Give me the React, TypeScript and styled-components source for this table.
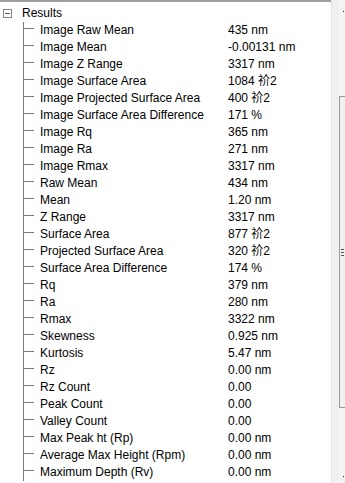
import React from "react";
import styled, { createGlobalStyle } from "styled-components";

const GlobalStyle = createGlobalStyle`
	html, body {
		margin: 0;
		padding: 0;
		background: #f0f0f0;
	}
	body {
		font-family: "Liberation Sans", Arial, "Noto Sans CJK SC", sans-serif;
		font-size: 12px;
		color: #000;
	}
`;

const results: [string, string][] = [
	["Image Raw Mean", "435 nm"],
	["Image Mean", "-0.00131 nm"],
	["Image Z Range", "3317 nm"],
	["Image Surface Area", "1084 祄2"],
	["Image Projected Surface Area", "400 祄2"],
	["Image Surface Area Difference", "171 %"],
	["Image Rq", "365 nm"],
	["Image Ra", "271 nm"],
	["Image Rmax", "3317 nm"],
	["Raw Mean", "434 nm"],
	["Mean", "1.20 nm"],
	["Z Range", "3317 nm"],
	["Surface Area", "877 祄2"],
	["Projected Surface Area", "320 祄2"],
	["Surface Area Difference", "174 %"],
	["Rq", "379 nm"],
	["Ra", "280 nm"],
	["Rmax", "3322 nm"],
	["Skewness", "0.925 nm"],
	["Kurtosis", "5.47 nm"],
	["Rz", "0.00 nm"],
	["Rz Count", "0.00"],
	["Peak Count", "0.00"],
	["Valley Count", "0.00"],
	["Max Peak ht (Rp)", "0.00 nm"],
	["Average Max Height (Rpm)", "0.00 nm"],
	["Maximum Depth (Rv)", "0.00 nm"],
];

const Window = styled.div`
	display: flex;
	width: 345px;
	height: 483px;
	overflow: hidden;
`;

const TreePanel = styled.div`
	width: 331px;
	flex-shrink: 0;
	background: #fff;
	border-top: 2px solid #a0a0a0;
	padding-top: 3px;
	box-sizing: border-box;
	overflow: hidden;
`;

const HeaderRow = styled.div`
	display: flex;
	align-items: center;
	height: 17px;
	line-height: 17px;
`;

const Expander = styled.span`
	position: relative;
	width: 9px;
	height: 9px;
	margin-left: 3px;
	margin-right: 10px;
	border: 1px solid #848484;
	box-sizing: border-box;
	&::after {
		content: "";
		position: absolute;
		left: 1px;
		right: 1px;
		top: 3px;
		height: 1px;
		background: #5a5a5a;
	}
`;

const Row = styled.div`
	display: flex;
	height: 17px;
	line-height: 17px;
	white-space: nowrap;
`;

const Branch = styled.span`
	position: relative;
	width: 40px;
	flex-shrink: 0;
	&::before {
		content: "";
		position: absolute;
		left: 23px;
		top: 0;
		bottom: 0;
		width: 1px;
		background: #7a7a7a;
	}
	&::after {
		content: "";
		position: absolute;
		left: 24px;
		top: 6px;
		width: 10px;
		height: 1px;
		background: #7a7a7a;
	}
`;

const Label = styled.span`
	width: 188px;
	flex-shrink: 0;
`;

const Value = styled.span``;

const RightStrip = styled.div`
	flex: 1;
	display: flex;
	background: #f0f0f0;
	border-left: 1px solid #e2e2e2;
	position: relative;
`;

const Gutter = styled.div`
	width: 7px;
	flex-shrink: 0;
`;

const Track = styled.div`
	flex: 1;
	display: flex;
	flex-direction: column;
	background: #f4f4f4;
	padding-top: 96px;
	padding-bottom: 75px;
`;

const Thumb = styled.div`
	flex: 1;
	border-left: 1px solid #9a9a9a;
	border-top: 1px solid #9a9a9a;
	border-bottom: 1px solid #9a9a9a;
	background: #f0f0f0;
	display: flex;
	align-items: center;
	justify-content: flex-end;
	padding-right: 1px;
`;

const Grip = styled.span`
	width: 3px;
	height: 7px;
	background: repeating-linear-gradient(
		to bottom,
		#555 0,
		#555 1px,
		transparent 1px,
		transparent 3px
	);
`;

const Tick = styled.span<{ $top: number }>`
	position: absolute;
	right: 1px;
	top: ${({ $top }) => $top}px;
	width: 1px;
	height: 1px;
	background: #222;
`;

export default function App() {
	return (
		<>
			<GlobalStyle />
			<Window>
				<TreePanel>
					<HeaderRow>
						<Expander />
						<span>Results</span>
					</HeaderRow>
					{results.map(([name, value]) => (
						<Row key={name}>
							<Branch />
							<Label>{name}</Label>
							<Value>{value}</Value>
						</Row>
					))}
				</TreePanel>
				<RightStrip>
					<Gutter />
					<Track>
						<Thumb>
							<Grip />
						</Thumb>
					</Track>
					<Tick $top={11} />
					<Tick $top={476} />
				</RightStrip>
			</Window>
		</>
	);
}
